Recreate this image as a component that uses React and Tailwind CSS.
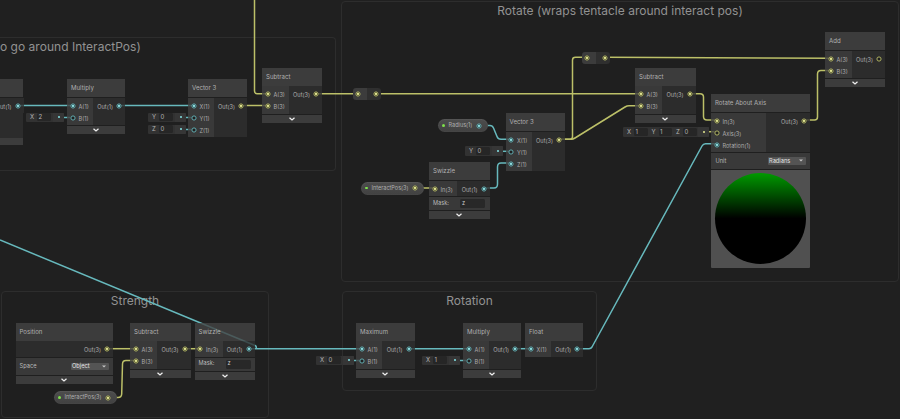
import React from "react";

const TEAL = "#67b9bd";
const LIME = "#bcc068";

function Port({ kind = "lime", open = false }) {
  const color = kind === "teal" ? TEAL : LIME;
  return (
    <svg className="block size-[6px] shrink-0" viewBox="0 0 6 6">
      <circle cx="3" cy="3" r="2.1" fill="#1f1f1f" stroke={color} strokeWidth="0.9" />
      {!open && <circle cx="3" cy="3" r="1.15" fill={kind === "teal" ? "#8fe3e6" : "#e6ea92"} />}
    </svg>
  );
}

function Footer() {
  return (
    <div className="mt-px flex h-[8px] items-center justify-center bg-[#434343]/80">
      <svg className="block h-[4px] w-[6px]" viewBox="0 0 6 4">
        <path d="M0.5 0.8 L3 2.9 L5.5 0.8" fill="none" stroke="#f0f0f0" strokeWidth="1.3" />
      </svg>
    </div>
  );
}

function PortLabel({ children }) {
  return <span className="relative top-[1px] text-[5.6px] leading-[12px] text-[#acacac]">{children}</span>;
}

function Node({ place, title, inputs = [], inputsWidth = "w-[26px]", out, footer = true, children }) {
  return (
    <div className={`absolute ${place}`}>
      <div className="flex h-[18px] items-center bg-[#434343]/80 pl-[4px] pt-px text-[6.1px] leading-none text-[#b0b0b0]">
        {title}
      </div>
      <div className="mt-[0.5px] flex">
        {inputs.length > 0 && (
          <div className={`flex shrink-0 flex-col bg-[#404040]/80 pb-[1.5px] pl-[2.5px] pt-[2px] ${inputsWidth}`}>
            {inputs.map((p) => (
              <div key={p.label} className="flex h-[12px] items-center gap-[3px]">
                <Port kind={p.kind} open={p.open} />
                <PortLabel>{p.label}</PortLabel>
              </div>
            ))}
          </div>
        )}
        <div className="flex flex-1 justify-end bg-[#2f2f2f]/80 pb-[1.5px] pr-[3px] pt-[2px]">
          {out && (
            <div className="flex h-[12px] items-center gap-[3px]">
              <PortLabel>{out.label}</PortLabel>
              <Port kind={out.kind} open={out.open} />
            </div>
          )}
        </div>
      </div>
      {children}
      {footer && <Footer />}
    </div>
  );
}

function MaskRow() {
  return (
    <div className="mt-px flex h-[13px] items-center bg-[#404040]/80 pl-[4px] text-[5.6px] leading-none text-[#b8b8b8]">
      <span className="w-[27px]">Mask:</span>
      <span className="flex h-[9px] w-[25px] items-center rounded-[1.5px] bg-[#282828] pl-[2px] text-[#cfcfcf]">
        z
      </span>
    </div>
  );
}

function SelectBox({ value, place }) {
  return (
    <div className={`flex h-[7.5px] items-center justify-between rounded-[1px] bg-[#545454] pl-[1.5px] pr-[2.5px] text-[5.7px] leading-none text-[#e4e4e4] ${place}`}>
      <span>{value}</span>
      <svg className="block h-[3px] w-[4px]" viewBox="0 0 4 3">
        <path d="M0 0.4H4L2 2.5Z" fill="#c8c8c8" />
      </svg>
    </div>
  );
}

function Field({ place, items, kind = "teal" }) {
  return (
    <div className={`absolute flex h-[9.5px] items-center rounded-[1px] bg-[#323232] text-[6px] leading-none text-[#b4b4b4] ${place}`}>
      {items.map(([axis, value]) => (
        <div key={axis} className="flex h-full items-center">
          <span className="w-[11px] pl-[4px]">{axis}</span>
          <span className="flex h-[8px] w-[13.5px] items-center rounded-[1.5px] bg-[#262626] pl-[1.5px]">{value}</span>
        </div>
      ))}
      <div className="ml-auto flex h-full w-[11px] items-center justify-center rounded-r-[1px] bg-[#363636]">
        <span className={`size-[2px] rounded-full ${kind === "teal" ? "bg-[#84e4e7]" : "bg-[#e6ea92]"}`} />
      </div>
    </div>
  );
}

function Property({ place, label, kind = "lime" }) {
  return (
    <div className={`absolute flex h-[13px] items-center rounded-full bg-linear-to-b from-[#555] to-[#444] p-px ${place}`}>
      <div className="flex h-full flex-1 items-center rounded-full bg-linear-to-b from-[#4c4c4c] to-[#424242] pl-[3px] pr-[5.500px]">
        <span className="size-[2.6px] shrink-0 rounded-full bg-[#7ee04c]" />
        <span className="relative top-[0.5px] ml-[4px] flex-1 whitespace-nowrap text-[5.5px] leading-none text-[#b0b0b0]">{label}</span>
        <Port kind={kind} />
      </div>
    </div>
  );
}

function Reroute({ place }) {
  return (
    <div className={`absolute flex h-[12px] w-[28px] overflow-hidden rounded-[3px] ${place}`}>
      <div className="flex flex-1 items-center bg-[#3c3c3c] pl-[2px]">
        <Port />
      </div>
      <div className="flex flex-1 items-center justify-end bg-[#2f2f2f] pr-[2px]">
        <Port />
      </div>
    </div>
  );
}

function Group({ place, title, titleClass = "text-center" }) {
  return (
    <div className={`absolute border border-[#2d2d2d] bg-[#1f1f1f] text-[12px] leading-[18px] text-[#929292] ${place}`}>
      <div className={`whitespace-nowrap ${titleClass}`}>{title}</div>
    </div>
  );
}

const WIRES = [
  { c: TEAL, d: "M17.5 105.5H72.5" },
  { c: TEAL, d: "M59 117.5H70" },
  { c: TEAL, d: "M119 105.5H194" },
  { c: TEAL, d: "M180.5 117.5H191.5" },
  { c: TEAL, d: "M180.5 129.5H191.5" },
  { c: LIME, d: "M241 105.5H268" },
  { c: LIME, d: "M254.5 0V91Q254.5 93.7 257 93.7H268" },
  { c: LIME, d: "M316 93.7H358" },
  { c: LIME, d: "M376.5 93.7H641" },
  { c: LIME, d: "M559 139.3H570Q572.5 139.3 572.5 136.5V60Q572.5 57.3 575.5 57.3H587" },
  { c: LIME, d: "M559 139.3H571.5Q573 139.2 575 138L625 107Q627 105.7 629 105.7H641" },
  { c: LIME, d: "M605 57.3L831 58.3" },
  { c: LIME, d: "M689.5 93.7H700Q703.5 93.7 703.5 97V116.5Q703.5 120 707 120H717" },
  { c: LIME, d: "M704 131.7H714.5" },
  { c: LIME, d: "M804 120H814.5Q817.5 120 817.5 117V74Q817.5 70.4 821 70.4H831" },
  { c: TEAL, d: "M478.5 125.5H490Q492.5 125.5 493.5 128L497 136.5Q498 139.3 501 139.3H512" },
  { c: TEAL, d: "M498.5 151.3H509.5" },
  { c: LIME, d: "M414.5 188H435.5" },
  { c: TEAL, d: "M483.5 188H494Q497.5 188 497.5 184V167Q497.5 163 501 163H512" },
  { c: LIME, d: "M107 348.7H136" },
  { c: LIME, d: "M111 397.5H118Q121.5 397.5 121.7 394L122.5 364Q122.5 360.5 126 360.5H136" },
  { c: LIME, d: "M184.5 348.7H200.5" },
  { c: TEAL, d: "M0 240L255 345.5Q257 346.5 256 348.7M249 348.7H362" },
  { c: TEAL, d: "M348.5 360.5H359.5" },
  { c: TEAL, d: "M408.5 348.7H469" },
  { c: TEAL, d: "M455 360.5H466" },
  { c: TEAL, d: "M515 348.7H530.5" },
  { c: TEAL, d: "M577 348.7H589Q591 348.7 592 347L702 146Q703.2 143.8 705.5 143.8H717" },
];

const one = (label, open) => ({ label, kind: "teal", open });
const three = (label, open) => ({ label, kind: "lime", open });

export default function App() {
  return (
    <div className="relative h-[419px] w-[900px] overflow-hidden bg-[#202020] font-['Inter','Liberation_Sans',sans-serif]">
      <Group place="left-0 top-[37px] h-[134px] w-[336px] rounded-r-[4px] border-l-0" title="o go around InteractPos)" titleClass="text-left tracking-[0.02px]" />
      <Group place="left-[341px] top-[1px] h-[281px] w-[558px] rounded-[4px]" title="Rotate (wraps tentacle around interact pos)" />
      <Group place="left-[1px] top-[291px] h-[127px] w-[268px] rounded-[4px]" title="Strength" />
      <Group place="left-[342px] top-[291px] h-[100px] w-[255px] rounded-[4px]" title="Rotation" />

      <svg className="absolute inset-0" width="900" height="419" viewBox="0 0 900 419" fill="none">
        {WIRES.map((w) => (
          <path key={w.d} d={w.d} stroke={w.c} strokeWidth="1.5" />
        ))}
      </svg>

      <Field place="left-[26px] top-[112.5px] w-[38px]" items={[["X", "2"]]} />
      <Field place="left-[148px] top-[112.5px] w-[38px]" items={[["Y", "0"]]} />
      <Field place="left-[148px] top-[124.5px] w-[38px]" items={[["Z", "0"]]} />
      <Field place="left-[465px] top-[146px] w-[38px]" items={[["Y", "0"]]} />
      <Field place="left-[623px] top-[127px] w-[86px]" items={[["X", "1"], ["Y", "1"], ["Z", "0"]]} kind="lime" />
      <Field place="left-[316px] top-[355.5px] w-[38px]" items={[["X", "0"]]} />
      <Field place="left-[422px] top-[355.5px] w-[38px]" items={[["X", "1"]]} />

      <Node place="left-0 top-[79px] w-[23px]" title="" out={one("ut(1)")} footer={false}>
        <div className="h-[24.5px] bg-[#2f2f2f]/80" />
        <div className="h-[7px] bg-[#434343]/80" />
      </Node>
      <Node place="left-[67px] top-[79px] w-[58px]" title="Multiply" inputs={[one("A(1)"), one("B(1)", true)]} out={one("Out(1)")} />
      <Node place="left-[188px] top-[79px] w-[59px]" title="Vector 3" inputs={[one("X(1)"), one("Y(1)", true), one("Z(1)", true)]} out={three("Out(3)")} footer={false} />
      <Node place="left-[262px] top-[67.5px] w-[60px]" title="Subtract" inputs={[three("A(3)"), three("B(3)")]} inputsWidth="w-[27px]" out={three("Out(3)")} />
      <Reroute place="left-[353px] top-[88px]" />
      <Reroute place="left-[581.5px] top-[51.5px]" />

      <Property place="left-[438px] top-[119px] w-[50px]" label="Radius(1)" kind="teal" />
      <Property place="left-[361px] top-[181.5px] w-[63px]" label="InteractPos(3)" />
      <Property place="left-[54px] top-[391px] w-[63px]" label="InteractPos(3)" />

      <Node place="left-[505.5px] top-[113px] w-[59.5px]" title="Vector 3" inputs={[one("X(1)"), one("Y(1)", true), one("Z(1)")]} out={three("Out(3)")} footer={false} />
      <Node place="left-[429px] top-[162px] w-[60.5px]" title="Swizzle" inputs={[three("In(3)")]} inputsWidth="w-[28px]" out={one("Out(1)")}>
        <MaskRow />
      </Node>
      <Node place="left-[635px] top-[67.5px] w-[60.5px]" title="Subtract" inputs={[three("A(3)"), three("B(3)")]} inputsWidth="w-[27px]" out={three("Out(3)")} />
      <Node place="left-[711px] top-[94px] w-[99px]" title="Rotate About Axis" inputs={[three("In(3)"), three("Axis(3)", true), one("Rotation(1)")]} inputsWidth="w-[55px]" out={three("Out(3)")} footer={false}>
        <div className="mt-[0.5px] flex h-[16.5px] items-center justify-between bg-[#404040]/80 pl-[4.5px] pr-[4.5px] text-[5.7px] leading-none text-[#b8b8b8]">
          <span>Unit</span>
          <SelectBox value="Radians" place="w-[38px]" />
        </div>
        <div className="mt-[0.5px] flex h-[98px] items-center justify-center rounded-b-[1px] bg-[#505050]">
          <div className="size-[90.5px] rounded-full bg-linear-to-b/srgb from-[#009a00] to-black to-[50%]" />
        </div>
      </Node>
      <Node place="left-[825px] top-[32px] w-[60px]" title="Add" inputs={[three("A(3)"), three("B(3)")]} inputsWidth="w-[27px]" out={three("Out(3)", true)} />

      <Node place="left-[15.5px] top-[322.5px] w-[97.5px]" title="Position" out={three("Out(3)")}>
        <div className="mt-px flex h-[17.5px] items-center justify-between bg-[#404040]/80 pl-[4px] pr-[4.5px] text-[5.7px] leading-none text-[#b8b8b8]">
          <span>Space</span>
          <SelectBox value="Object" place="w-[38px]" />
        </div>
      </Node>
      <Node place="left-[130px] top-[322.5px] w-[60.5px]" title="Subtract" inputs={[three("A(3)"), three("B(3)")]} inputsWidth="w-[27px]" out={three("Out(3)")} />
      <Node place="left-[194.5px] top-[322.5px] w-[60px]" title="Swizzle" inputs={[three("In(3)")]} inputsWidth="w-[28px]" out={one("Out(1)")}>
        <MaskRow />
      </Node>
      <Node place="left-[356px] top-[322.5px] w-[58.5px]" title="Maximum" inputs={[one("A(1)"), one("B(1)", true)]} out={one("Out(1)")} />
      <Node place="left-[463px] top-[322.5px] w-[58px]" title="Multiply" inputs={[one("A(1)"), one("B(1)", true)]} out={one("Out(1)")} />
      <Node place="left-[525px] top-[322.5px] w-[58px]" title="Float" inputs={[one("X(1)")]} out={one("Out(1)")} footer={false} />
    </div>
  );
}
